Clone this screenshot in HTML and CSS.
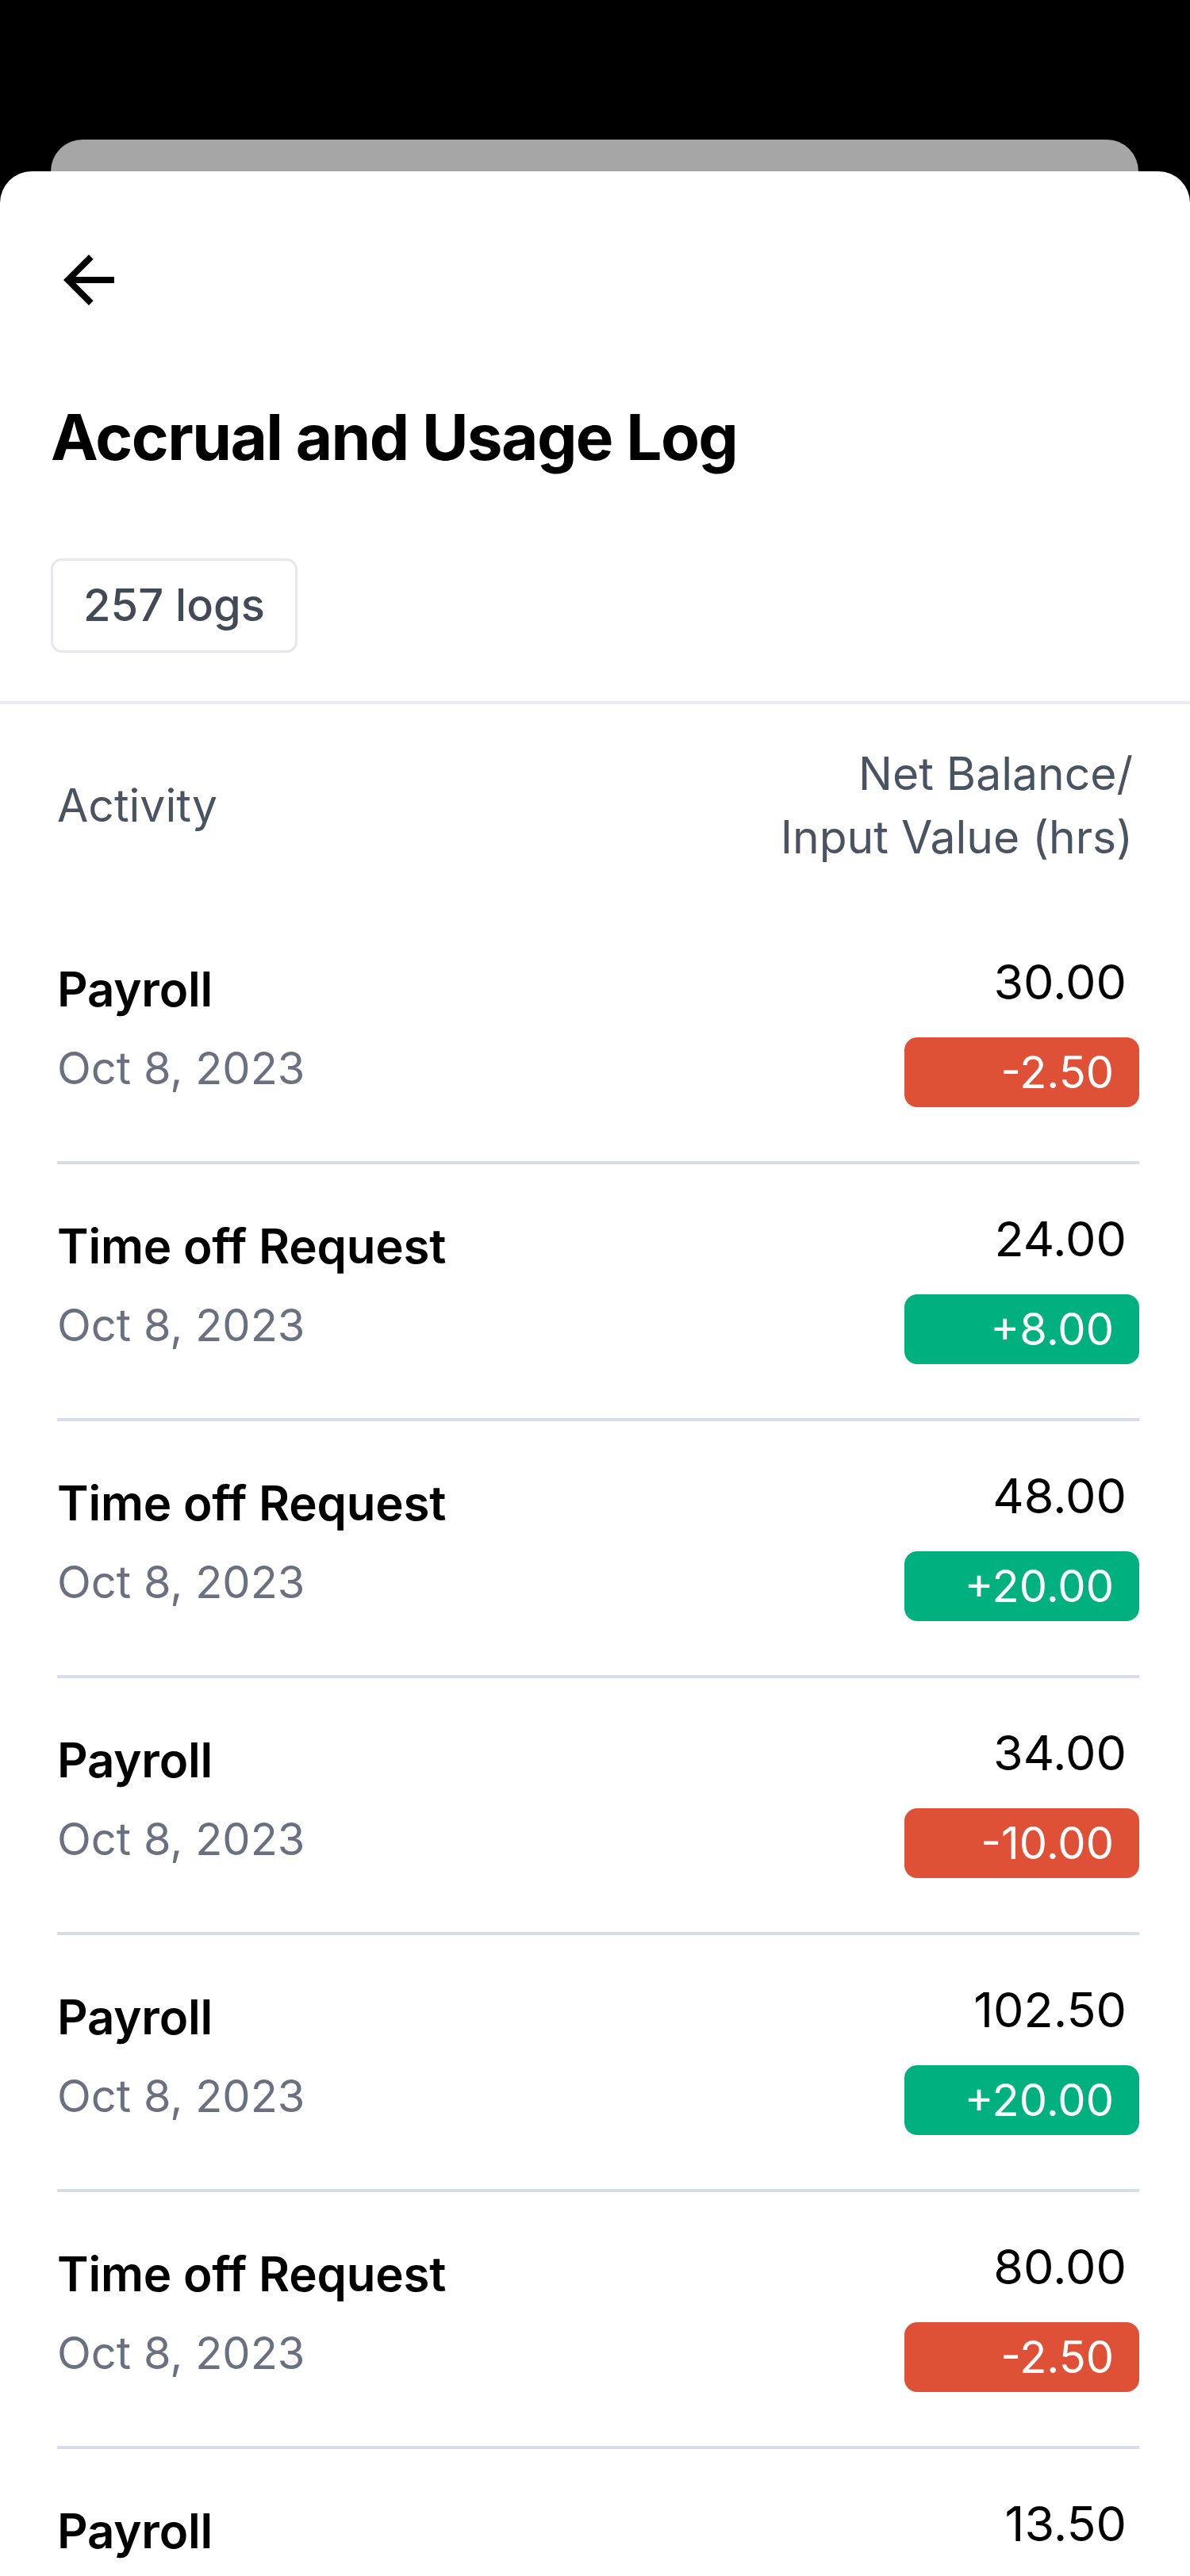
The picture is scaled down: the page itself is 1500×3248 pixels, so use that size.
FILE: index.html
```html
<!DOCTYPE html>
<html lang="en">
<head>
    <meta charset="UTF-8">
    <meta name="viewport" content="width=device-width, initial-scale=1.0">
    <title>Accrual and Usage Log</title>
    <link rel="stylesheet" href="styles.css">
</head>
<body>
    <div class="backdrop"></div>

    <main class="sheet">
        <header class="sheet-head">
            <button class="back-btn" aria-label="Back">
                <svg viewBox="0 0 24 24" width="96" height="96">
                    <path d="M20 11H7.83l5.59-5.59L12 4l-8 8 8 8 1.41-1.41L7.83 13H20v-2z" fill="#000"/>
                </svg>
            </button>
            <h1 class="title">Accrual and Usage Log</h1>
            <span class="count-chip">257 logs</span>
        </header>

        <section class="log">
            <div class="log-head">
                <span>Activity</span>
                <span class="log-head-value">Net Balance/<br>Input Value (hrs)</span>
            </div>

            <div class="log-row">
                <div class="log-info">
                    <p class="log-name">Payroll</p>
                    <p class="log-date">Oct 8, 2023</p>
                </div>
                <div class="log-values">
                    <p class="log-balance">30.00</p>
                    <span class="pill minus">-2.50</span>
                </div>
            </div>

            <div class="log-row">
                <div class="log-info">
                    <p class="log-name">Time off Request</p>
                    <p class="log-date">Oct 8, 2023</p>
                </div>
                <div class="log-values">
                    <p class="log-balance">24.00</p>
                    <span class="pill plus">+8.00</span>
                </div>
            </div>

            <div class="log-row">
                <div class="log-info">
                    <p class="log-name">Time off Request</p>
                    <p class="log-date">Oct 8, 2023</p>
                </div>
                <div class="log-values">
                    <p class="log-balance">48.00</p>
                    <span class="pill plus">+20.00</span>
                </div>
            </div>

            <div class="log-row">
                <div class="log-info">
                    <p class="log-name">Payroll</p>
                    <p class="log-date">Oct 8, 2023</p>
                </div>
                <div class="log-values">
                    <p class="log-balance">34.00</p>
                    <span class="pill minus">-10.00</span>
                </div>
            </div>

            <div class="log-row">
                <div class="log-info">
                    <p class="log-name">Payroll</p>
                    <p class="log-date">Oct 8, 2023</p>
                </div>
                <div class="log-values">
                    <p class="log-balance">102.50</p>
                    <span class="pill plus">+20.00</span>
                </div>
            </div>

            <div class="log-row">
                <div class="log-info">
                    <p class="log-name">Time off Request</p>
                    <p class="log-date">Oct 8, 2023</p>
                </div>
                <div class="log-values">
                    <p class="log-balance">80.00</p>
                    <span class="pill minus">-2.50</span>
                </div>
            </div>

            <div class="log-row">
                <div class="log-info">
                    <p class="log-name">Payroll</p>
                    <p class="log-date">Oct 8, 2023</p>
                </div>
                <div class="log-values">
                    <p class="log-balance">13.50</p>
                    <span class="pill minus">-10.00</span>
                </div>
            </div>
        </section>
    </main>
</body>
</html>
```

FILE: styles.css
```css
body {
    margin: 0;
    padding-top: 176px;
    background-color: #000;
    font-family: Inter, "Noto Sans", sans-serif;
}

p {
    margin: 0;
}

/* the card peeking out behind the sheet */
.backdrop {
    height: 40px;
    margin: 0 65px 0 64px;
    background-color: #a6a6a6;
    border-radius: 40px 40px 0 0;
}

.sheet {
    min-height: 3100px;
    background-color: #fff;
    border-radius: 40px 40px 0 0;
}

.sheet-head {
    padding: 89px 64px 61px 64px;
    border-bottom: 4px solid #eaebf0;
}

.back-btn {
    display: block;
    width: 96px;
    height: 96px;
    padding: 0;
    border: none;
    background: none;
}

.back-btn svg {
    display: block;
}

.title {
    margin: 102px 0 0 0;
    font-size: 80px;
    line-height: 96px;
    font-weight: 700;
    letter-spacing: -1.6px;
    color: #000;
}

.count-chip {
    display: inline-block;
    box-sizing: border-box;
    height: 119px;
    margin-top: 105px;
    padding: 0 38px;
    border: 3px solid #e6e7ec;
    border-radius: 14px;
    font-size: 56px;
    line-height: 113px;
    font-weight: 500;
    color: #414a56;
}

.log {
    margin: 0 64px 0 72px;
}

.log-head {
    display: flex;
    justify-content: space-between;
    align-items: center;
    height: 256px;
    padding-right: 8px;
    font-size: 57px;
    line-height: 80px;
    color: #4a5361;
}

.log-head-value {
    text-align: right;
}

.log-row {
    display: flex;
    justify-content: space-between;
    padding: 56px 0 68px 0;
    border-bottom: 4px solid #d9ddea;
}

.log-info {
    padding-top: 11px;
}

.log-name {
    font-size: 60px;
    line-height: 72px;
    font-weight: 600;
    letter-spacing: -0.2px;
    color: #000;
}

.log-date {
    margin-top: 28px;
    font-size: 56px;
    line-height: 72px;
    color: #6b7080;
}

.log-values {
    display: flex;
    flex-direction: column;
    align-items: flex-end;
}

.log-balance {
    padding-right: 16px;
    font-size: 61px;
    line-height: 76px;
    color: #000;
}

.pill {
    display: block;
    box-sizing: border-box;
    width: 296px;
    height: 88px;
    margin-top: 32px;
    padding-right: 32px;
    border-radius: 16px;
    text-align: right;
    font-size: 56px;
    line-height: 88px;
    color: #fff;
}

.pill.minus {
    background-color: #de5137;
}

.pill.plus {
    background-color: #00b17f;
}
```
